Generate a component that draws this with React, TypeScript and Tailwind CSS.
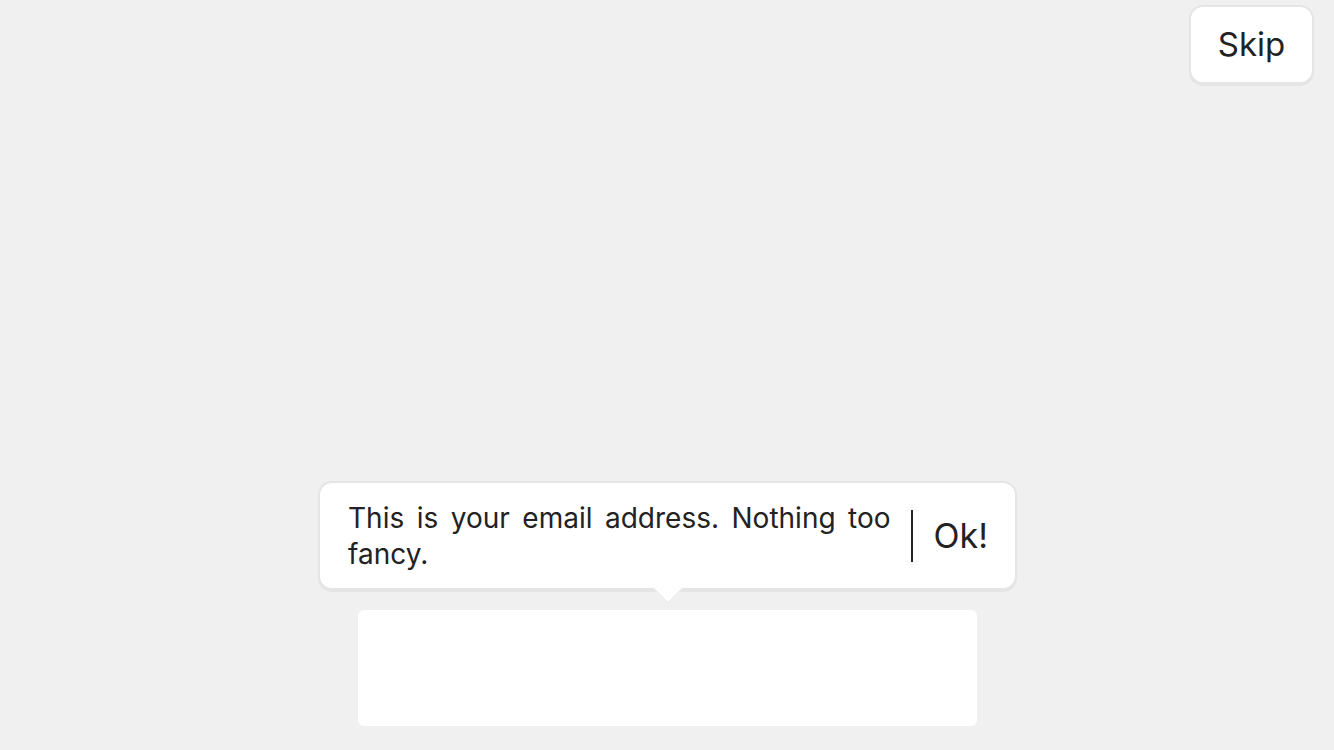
import React from "react";

export default function App() {
  return (
    <div
      className="relative flex h-[750px] w-full flex-col items-center justify-end bg-[#f0f0f0] pb-[24px]"
      style={{ fontFamily: "Inter, 'Noto Sans', sans-serif" }}
    >
      <button className="absolute right-[20px] top-[5px] flex h-[79px] w-[125px] items-center justify-center rounded-[14px] border-2 border-[#e5e5e5] bg-white text-[33px] text-[#222] shadow-[0_2px_0_#e5e5e5]">
        Skip
      </button>

      <div className="relative ml-[1px] flex h-[109px] w-[699px] items-center rounded-[14px] border-2 border-[#e5e5e5] bg-white pl-[28px] pr-[27px] shadow-[0_2px_0_#e5e5e5]">
        <p className="w-[547px] text-justify text-[28px] leading-[36px] text-[#222]">
          This is your email address. Nothing too fancy.
        </p>
        <div className="ml-[20px] h-[52px] w-[2px] bg-[#222]" />
        <span className="ml-[21px] text-[34px] text-[#222]">Ok!</span>
        <div className="absolute bottom-[-15px] left-[333px] h-0 w-0 border-l-[15px] border-r-[15px] border-t-[15px] border-l-transparent border-r-transparent border-t-[#e8e8e8]" />
        <div className="absolute bottom-[-14px] left-[334px] h-0 w-0 border-l-[14px] border-r-[14px] border-t-[14px] border-l-transparent border-r-transparent border-t-white" />
      </div>

      <div className="mt-[20px] h-[116px] w-[619px] rounded-[6px] bg-white" />
    </div>
  );
}
